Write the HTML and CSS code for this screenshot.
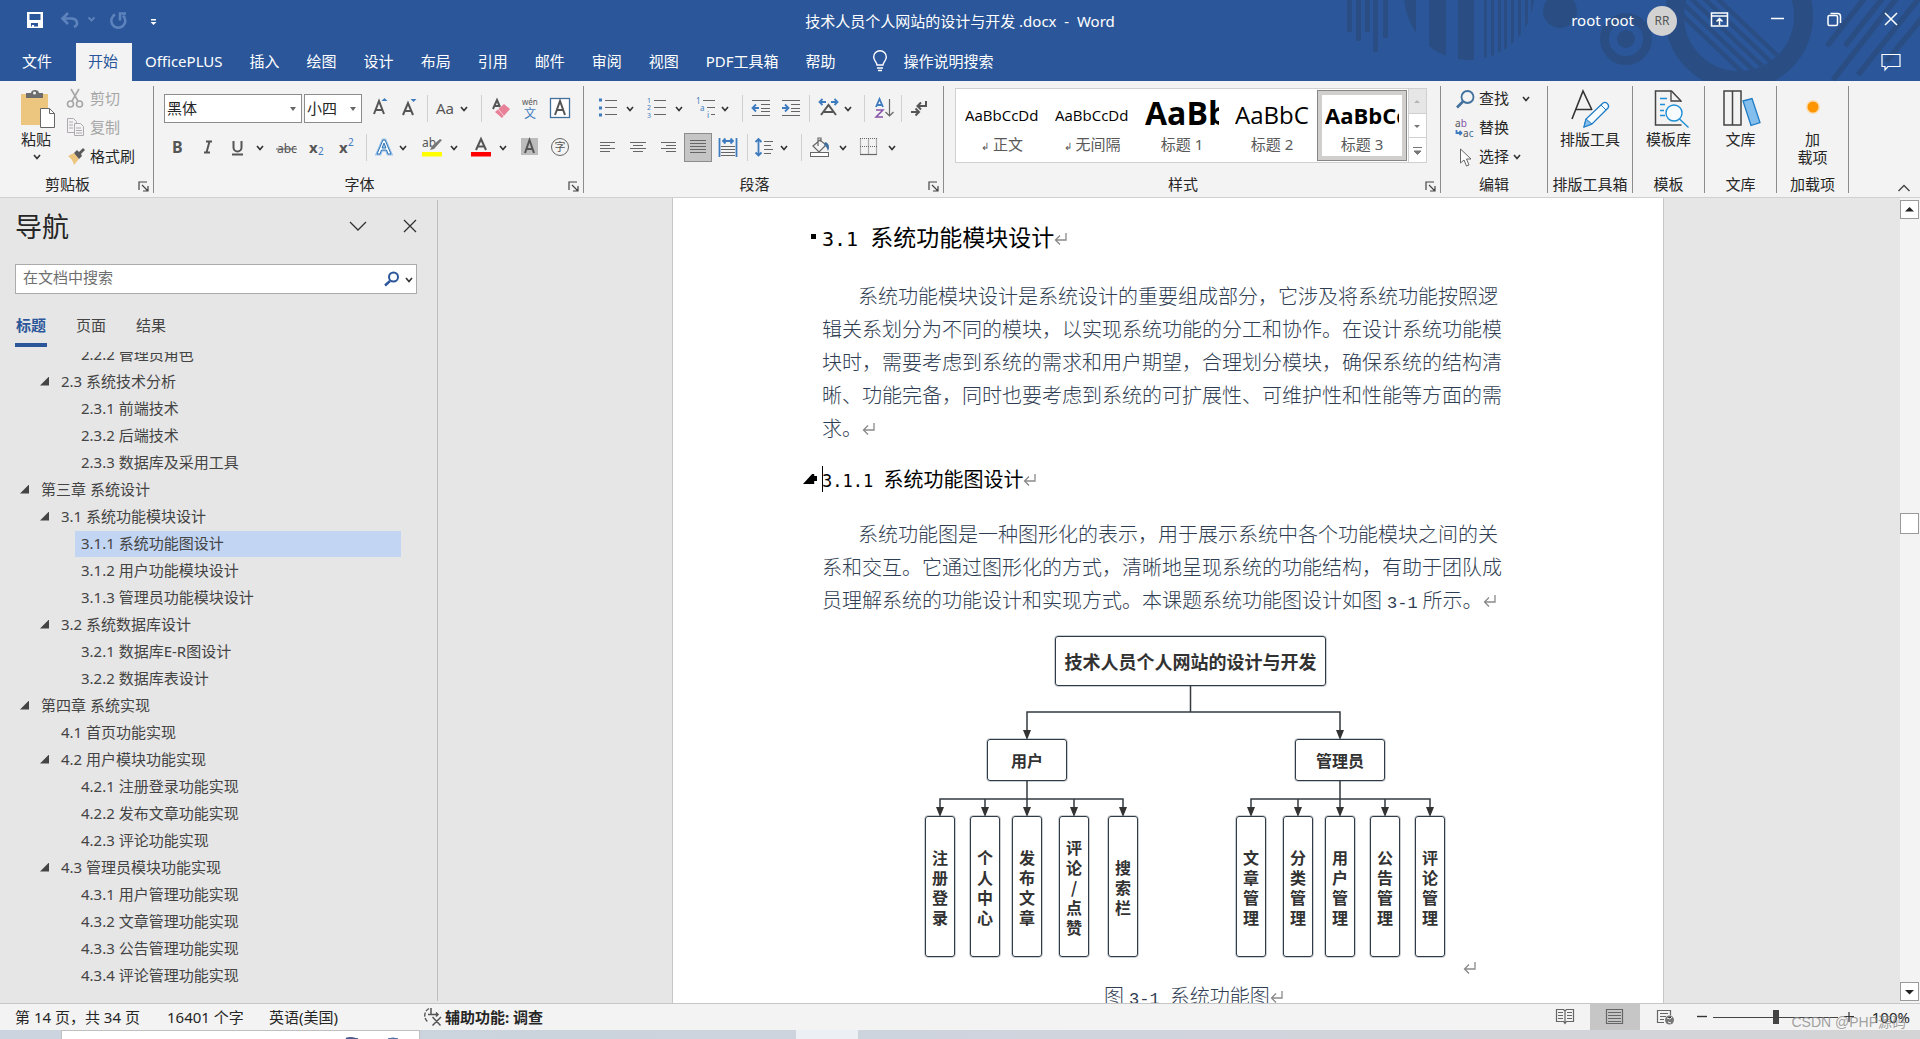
FILE: index.html
```html
<!DOCTYPE html>
<html lang="zh-CN">
<head>
<meta charset="utf-8">
<title>技术人员个人网站的设计与开发 .docx - Word</title>
<link rel="stylesheet" href="styles.css">
</head>
<body>
<svg class="defs" aria-hidden="true">
  <defs>
    <path id="chev" d="M-3 -2 L0 1.500 L3 -2" fill="none" stroke="#333" stroke-width="1.600"/>
    <g id="launch" fill="none" stroke="#444" stroke-width="1.200"><path d="M1 9V1H9M4 4L9.500 9.500M10 5V10H5"/></g>
    <path id="ret" d="M12 1V8H2M6 3.500L1.500 8L6 12.500" fill="none" stroke="#8a8a8a" stroke-width="1.300"/>
  </defs>
</svg>

<header class="top">
  <svg class="decor" width="600" height="81" viewBox="1320 0 600 81" aria-hidden="true">
    <defs>
      <clipPath id="disc"><circle cx="1469" cy="-5" r="65"/></clipPath>
      <clipPath id="ringHole"><circle cx="1739" cy="16" r="55"/></clipPath>
    </defs>
    <g fill="#2a4e84">
      <path d="M1347 0h5v32h-5zM1356 0h5v41h-5zM1365 0h5v32h-5zM1373 0h5v52h-5zM1383 0h5v38h-5z"/>
      <path clip-path="url(#disc)" d="M1400 0h16v70h-16zM1429 0h17v70h-17zM1458 0h16v70h-16zM1484 0h3v70h-3zM1491 0h3v70h-3zM1498 0h3v70h-3zM1504 0h3v70h-3zM1511 0h3v70h-3zM1518 0h3v70h-3zM1525 0h3v70h-3zM1531 0h3v70h-3z"/>
      <circle cx="1560" cy="11" r="17"/>
      <circle cx="1626" cy="39" r="9"/>
    </g>
    <circle cx="1626" cy="39" r="21.500" fill="none" stroke="#2a4e84" stroke-width="9"/>
    <circle cx="1739" cy="16" r="64.500" fill="none" stroke="#2a4e84" stroke-width="19"/>
    <g clip-path="url(#ringHole)" stroke="#2a4e84" stroke-width="4.500">
      <path d="M1690 -15L1790 80M1680 -12L1780 83M1670 -9L1770 86M1660 -6L1760 89M1700 -18L1800 77" />
    </g>
    <g stroke="#2a4e84" stroke-width="5.500">
      <path d="M1827 46L1871 -10M1845 46L1889 -10M1833 80L1903 -10M1858 75L1924 -8M1886 62L1930 8"/>
    </g>
  </svg>
  <div class="titlebar">
    <div class="quick">
      <button aria-label="保存"><svg width="32" height="28" viewBox="19 6 32 28"><path d="M27 12h16v16H27z" fill="#fff"/><path d="M29.500 14h11v6h-11zM31 23h7v3.500h-4V25h-2v1.500h-1z" fill="#2b579a"/></svg></button>
      <button aria-label="撤消"><svg width="48" height="28" viewBox="51 6 48 28"><g fill="none" stroke="#5d83bd" stroke-width="2.600"><path d="M68 13l-5.500 5.500L68 24M63 18.500h9a5.500 4.500 0 0 1 2 8.500"/><path d="M88.500 17.500l3 3 3-3" stroke-width="1.800"/></g></svg></button>
      <button aria-label="恢复"><svg width="36" height="28" viewBox="99 6 36 28"><path d="M115 14.500a7 7 0 1 0 8 1M126 13.500h-6v7" fill="none" stroke="#5d83bd" stroke-width="2.600"/></svg></button>
      <button aria-label="自定义快速访问工具栏"><svg width="36" height="28" viewBox="135 6 36 28"><path d="M151 19h5v1.500h-5zM150.500 22h6l-3 3z" fill="#fff"/></svg></button>
    </div>
    <div class="title">技术人员个人网站的设计与开发 .docx  -  Word</div>
    <div class="account">
      <span class="user-name">root root</span><span class="avatar">RR</span>
      <button class="win" aria-label="功能区显示选项"><svg width="57" height="40" viewBox="1691 0 57 40"><path d="M1711.500 13h16v13h-16zM1711 16h17M1719.500 25v-6.500M1716.500 21.500l3-3 3 3" fill="none" stroke="#fff" stroke-width="1.500"/></svg></button>
      <button class="win" aria-label="最小化"><svg width="57" height="40" viewBox="1748 0 57 40"><path d="M1771 18.500h13" stroke="#fff" stroke-width="1.500"/></svg></button>
      <button class="win" aria-label="还原"><svg width="58" height="40" viewBox="1805 0 58 40"><rect x="1828" y="15.500" width="9.500" height="10" rx="1.500" fill="none" stroke="#fff" stroke-width="1.500"/><path d="M1830.500 13.500h7a3 3 0 0 1 3 3v6.500" fill="none" stroke="#fff" stroke-width="1.500"/></svg></button>
      <button class="win" aria-label="关闭"><svg width="57" height="40" viewBox="1863 0 57 40"><path d="M1885 13l12 12M1897 13l-12 12" stroke="#fff" stroke-width="1.500"/></svg></button>
    </div>
  </div>
  <nav class="tabs">
    <button class="file">文件</button>
    <button class="active">开始</button>
    <button>OfficePLUS</button>
    <button>插入</button>
    <button>绘图</button>
    <button>设计</button>
    <button>布局</button>
    <button>引用</button>
    <button>邮件</button>
    <button>审阅</button>
    <button>视图</button>
    <button>PDF工具箱</button>
    <button>帮助</button>
    <button class="tell"><svg width="20" height="24" viewBox="869 50 20 24"><path d="M876 66c0-3-3.300-4-3.300-8a6.300 6.300 0 0 1 12.600 0c0 4-3.300 5-3.300 8zM876 69h6M877 71.500h4" fill="none" stroke="#fff" stroke-width="1.400"/></svg>操作说明搜索</button>
    <button class="comment" aria-label="批注"><svg width="24" height="24" viewBox="1879 50 24 24"><path d="M1882 54.500h18v12h-12l-3 3.500v-3.500h-3z" fill="none" stroke="#fff" stroke-width="1.200"/></svg></button>
  </nav>
</header>

<section class="ribbon">
  <div class="group g-clip">
    <div class="body">
      <button class="tall paste"><svg width="42" height="42" viewBox="18 88 42 42"><path d="M22 94h27v31H22z" fill="#ecc67e"/><path d="M27 98v-5h5c0-4 8-4 8 0h4v5z" fill="#6d6d6d"/><circle cx="35.500" cy="93" r="1.500" fill="#f3f3f3"/><path d="M41.500 108.500h9l5 5v14h-14z" fill="#fff" stroke="#666"/><path d="M50.500 108.500v5h5" fill="none" stroke="#666"/></svg><span>粘贴</span><svg width="42" height="18" viewBox="17 149 42 18"><use href="#chev" x="37" y="158"/></svg></button>
      <div class="stack">
        <button class="off"><svg width="20" height="22" viewBox="66 88 20 22"><g fill="none" stroke="#a6a6a6" stroke-width="1.600"><path d="M71 89l7 12M79 89l-7 12"/><circle cx="70.500" cy="104" r="3"/><circle cx="79.500" cy="104" r="3"/></g></svg><span>剪切</span></button>
        <button class="off"><svg width="20" height="22" viewBox="66 117 20 22"><g fill="#f3f3f3" stroke="#b0a8b0"><path d="M67.500 118.500h6l3 3v11h-9z"/><path d="M74.500 123.500h6l3 3v9h-9zM76 128h5M76 130.500h6M76 133h6M69 122h4M69 125h4M69 128h4"/></g></svg><span>复制</span></button>
        <button><svg width="20" height="22" viewBox="66 146 20 22"><path d="M68 156l6-3 5 6-5 6c-1-4-3-7-6-9z" fill="#ecc67e"/><path d="M74 153l3-3 2 2 4-4 2 2-4 4 1 2-3 3z" fill="#5a5a5a"/></svg><span>格式刷</span></button>
      </div>
    </div>
    <div class="label"><span>剪贴板</span><button class="launcher" aria-label="剪贴板设置"><svg width="11" height="11"><use href="#launch"/></svg></button></div>
  </div>

  <div class="group g-font">
    <div class="body rows">
      <div class="row">
        <label class="combo font"><select aria-label="字体"><option>黑体</option></select></label>
        <label class="combo size"><select aria-label="字号"><option>小四</option></select></label>
        <button aria-label="增大字号"><svg width="33" height="29" viewBox="362 94 33 29"><path d="M374 114l5-13 5 13M375.500 110h7" class="k2"/><path d="M381.500 101h6l-3-3z" class="fb"/></svg></button>
        <button aria-label="减小字号"><svg width="28" height="29" viewBox="395 94 28 29"><path d="M403 115l5-12 5 12M404.500 111h7" class="k2"/><path d="M410.500 99h6l-3 3z" class="fb"/></svg></button>
        <i class="sep"></i>
        <button aria-label="更改大小写"><svg width="46" height="29" viewBox="431 94 46 29"><text x="436" y="114" class="t" font-size="15">Aa</text><use href="#chev" x="464" y="109"/></svg></button>
        <i class="sep"></i>
        <button aria-label="清除格式"><svg width="31" height="29" viewBox="485 94 31 29"><path d="M493 109l4-9 3 7M494 106h5" class="k2"/><path d="M495 112l9-8 6 5-8 9z" fill="#e88097"/><path d="M498 109l6 7" stroke="#f8ccd6"/></svg></button>
        <button aria-label="拼音指南"><svg width="29" height="29" viewBox="516 94 29 29"><text x="522" y="105" class="t" font-size="8">wén</text><text x="524" y="118" class="tb" font-size="12">文</text></svg></button>
        <button aria-label="字符边框"><svg width="30" height="29" viewBox="545 94 30 29"><rect x="550.500" y="98.500" width="19" height="19" fill="#fff" stroke="#41719c" stroke-width="1.300"/><path d="M555 115l5-14 5 14M557 110h6" class="k2"/></svg></button>
      </div>
      <div class="row">
        <button aria-label="加粗"><svg width="28" height="29" viewBox="164 133 28 29"><text x="172" y="153" class="t b" font-size="16">B</text></svg></button>
        <button aria-label="倾斜"><svg width="30" height="29" viewBox="192 133 30 29"><path d="M206 141.500h6M204 152.500h6M209.500 141.500l-3 11" class="k2"/></svg></button>
        <button aria-label="下划线"><svg width="48" height="29" viewBox="222 133 48 29"><path d="M233.500 141v6.500a4 4 0 0 0 8 0V141M232 154.500h11" class="k2"/><use href="#chev" x="260" y="148"/></svg></button>
        <button aria-label="删除线"><svg width="33" height="29" viewBox="270 133 33 29"><text x="277" y="153" class="t" font-size="12">abc</text><path d="M276 149h21" stroke="#555"/></svg></button>
        <button aria-label="下标"><svg width="29" height="29" viewBox="303 133 29 29"><text x="309" y="153" class="t b" font-size="15">x</text><text x="318" y="155" class="tb" font-size="10">2</text></svg></button>
        <button aria-label="上标"><svg width="30" height="29" viewBox="332 133 30 29"><text x="339" y="153" class="t b" font-size="15">x</text><text x="348" y="146" class="tb" font-size="10">2</text></svg></button>
        <i class="sep"></i>
        <button aria-label="文本效果"><svg width="43" height="29" viewBox="370 133 43 29"><path d="M377 154l6-14h2l6 14h-3l-1.500-4h-5l-1.500 4zM382 148h4l-2-5z" fill="#fff" stroke="#9fc3ea" stroke-width="3"/><path d="M377 154l6-14h2l6 14h-3l-1.500-4h-5l-1.500 4zM382 148h4l-2-5z" fill="#fff" stroke="#2e75b6"/><use href="#chev" x="403" y="148"/></svg></button>
        <button aria-label="突出显示"><svg width="50" height="29" viewBox="413 133 50 29"><text x="422" y="147" class="t" font-size="12">ab</text><path d="M440 139l2 1-8 9-4 1 2-4z" fill="#777"/><path d="M422 152h20v4.500h-20z" fill="#ff0"/><use href="#chev" x="454" y="148"/></svg></button>
        <button aria-label="字体颜色"><svg width="49" height="29" viewBox="463 133 49 29"><path d="M476 150l5-11 5 11M478 146.500h6" class="k2"/><path d="M471 152h20v4.500h-20z" fill="red"/><use href="#chev" x="503" y="148"/></svg></button>
        <button aria-label="字符底纹"><svg width="33" height="29" viewBox="512 133 33 29"><path d="M521 138h17v17h-17z" fill="#bcbcbc"/><path d="M525 153l4.500-13 4.500 13M526.500 149h6" class="k2"/></svg></button>
        <button aria-label="带圈字符"><svg width="30" height="29" viewBox="545 133 30 29"><circle cx="560" cy="147" r="8.500" fill="none" stroke="#666"/><text x="554.500" y="151" class="t" font-size="11">字</text></svg></button>
      </div>
    </div>
    <div class="label"><span>字体</span><button class="launcher" aria-label="字体设置"><svg width="11" height="11"><use href="#launch"/></svg></button></div>
  </div>

  <div class="group g-para">
    <div class="body rows">
      <div class="row">
        <button aria-label="项目符号"><svg width="48" height="29" viewBox="592 94 48 29"><path d="M599 98.500h3v3h-3zM599 106.500h3v3h-3zM599 113.500h3v3h-3z" class="fb"/><path d="M605 100.500h12M605 107.500h12M605 114.500h12" class="k"/><use href="#chev" x="630" y="109"/></svg></button>
        <button aria-label="编号"><svg width="50" height="29" viewBox="640 94 50 29"><g class="tb" font-size="7"><text x="647" y="103">1</text><text x="647" y="110">2</text><text x="647" y="118">3</text></g><path d="M654 100.500h12M654 107.500h12M654 114.500h12" class="k"/><use href="#chev" x="679" y="109"/></svg></button>
        <button aria-label="多级列表"><svg width="48" height="29" viewBox="690 94 48 29"><g class="tb" font-size="8"><text x="696" y="104">1</text><text x="700" y="111">a</text><text x="707" y="118">i</text></g><path d="M703 100.500h12M707 107.500h8M711 114.500h4" class="k"/><use href="#chev" x="725" y="109"/></svg></button>
        <i class="sep"></i>
        <button aria-label="减少缩进"><svg width="30" height="29" viewBox="746 94 30 29"><path d="M752 100.500h18M761 104.500h9M761 108.500h9M761 111.500h9M752 115.500h18" class="k"/><path d="M759 108h-6M756 104.500l-3.500 3.500 3.500 3.500" class="kb"/></svg></button>
        <button aria-label="增加缩进"><svg width="29" height="29" viewBox="776 94 29 29"><path d="M782 100.500h18M791 104.500h9M791 108.500h9M791 111.500h9M782 115.500h18" class="k"/><path d="M782 108h6M785 104.500l3.500 3.500-3.500 3.500" class="kb"/></svg></button>
        <i class="sep"></i>
        <button aria-label="中文版式"><svg width="47" height="29" viewBox="813 94 47 29"><path d="M821 115l7.500-10 7.500 10M824 112h9" class="k2"/><path d="M820 102h6M822.500 99l-3 3 3 3M831 102h6M834.500 99l3 3-3 3" class="kb"/><use href="#chev" x="848" y="109"/></svg></button>
        <i class="sep"></i>
        <button aria-label="排序"><svg width="29" height="29" viewBox="868 94 29 29"><path d="M876 107l3.500-8 3.500 8M877 105h5" class="kb"/><path d="M876 110h7l-7 7h7" fill="none" stroke="#8653a8" stroke-width="1.500"/><path d="M889.500 99v17M885.500 112l4 4 4-4" class="k"/></svg></button>
        <i class="sep"></i>
        <button aria-label="显示编辑标记"><svg width="30" height="29" viewBox="905 94 30 29"><path d="M926 101v5h-8M921 102.500l-3.500 3.500 3.500 3.500M911 112h8M915.500 108.500l3.500 3.500-3.500 3.500" class="k2"/></svg></button>
      </div>
      <div class="row">
        <button aria-label="左对齐"><svg width="31" height="29" viewBox="592 133 31 29"><path d="M600 142.500h15M600 145.500h10M600 148.500h15M600 151.500h10" class="k"/></svg></button>
        <button aria-label="居中"><svg width="31" height="29" viewBox="623 133 31 29"><path d="M630 142.500h16M633 145.500h10M630 148.500h16M633 151.500h10" class="k"/></svg></button>
        <button aria-label="右对齐"><svg width="30" height="29" viewBox="654 133 30 29"><path d="M661 142.500h15M666 145.500h10M661 148.500h15M666 151.500h10" class="k"/></svg></button>
        <button aria-label="两端对齐" class="pressed"><svg width="28" height="29" viewBox="684 133 28 29"><path d="M690 140.500h16M690 143.500h16M690 146.500h16M690 149.500h16M690 152.500h16" class="k"/></svg></button>
        <button aria-label="分散对齐"><svg width="31" height="29" viewBox="712 133 31 29"><path d="M719.500 138v19M736.500 138v19M723 141h10M725.500 138.500l-2.500 2.500 2.500 2.500M730.500 138.500l2.500 2.500-2.500 2.500" class="kb"/><path d="M721 146.500h14M721 149.500h14M721 152.500h14M721 155.500h14" class="k"/></svg></button>
        <i class="sep"></i>
        <button aria-label="行距"><svg width="46" height="29" viewBox="751 133 46 29"><path d="M758.500 139v17M755.500 142l3-3 3 3M755.500 152.500l3 3 3-3" class="kb"/><path d="M764 141.500h9M764 145.500h7M764 149.500h9M764 153.500h7" class="k"/><use href="#chev" x="784" y="148"/></svg></button>
        <i class="sep"></i>
        <button aria-label="底纹"><svg width="48" height="29" viewBox="805 133 48 29"><path d="M813 146l7-6 6 5-7 7zM818 146v-8h3v4" fill="none" class="k"/><path d="M825 142c4 1 5 5 3 9-1-3-2-5-4-6z" fill="#41719c"/><rect x="810.500" y="152.500" width="18" height="4" fill="#fff" stroke="#666"/><use href="#chev" x="843" y="148"/></svg></button>
        <button aria-label="边框"><svg width="50" height="29" viewBox="853 133 50 29"><path d="M860.500 138.500v16M876.500 138.500v16M868.500 138.500v16M860 138.500h17M860 146.500h17" class="k" stroke-dasharray="1 1"/><path d="M860 154.500h17" class="k"/><use href="#chev" x="892" y="148"/></svg></button>
      </div>
    </div>
    <div class="label"><span>段落</span><button class="launcher" aria-label="段落设置"><svg width="11" height="11"><use href="#launch"/></svg></button></div>
  </div>

  <div class="group g-style">
    <div class="body">
      <div class="gallery">
        <div class="styles">
          <button><b class="pv">AaBbCcDd</b><span><small>↲</small> 正文</span></button>
          <button><b class="pv">AaBbCcDd</b><span><small>↲</small> 无间隔</span></button>
          <button><b class="pv h1">AaBb</b><span>标题 1</span></button>
          <button><b class="pv h2">AaBbC</b><span>标题 2</span></button>
          <button class="chosen"><b class="pv h3">AaBbCc</b><span>标题 3</span></button>
        </div>
        <div class="updown">
          <button class="dis" aria-label="上一行"><svg width="16" height="22"><path d="M5 13h6l-3-3z" fill="#b5b5b5"/></svg></button>
          <button aria-label="下一行"><svg width="16" height="22"><path d="M5 10h6l-3 3z" fill="#777"/></svg></button>
          <button aria-label="其他样式"><svg width="16" height="22"><path d="M4 8.500h9M5 12h7l-3.500 3.500z" fill="#777" stroke="#777"/></svg></button>
        </div>
      </div>
    </div>
    <div class="label"><span>样式</span><button class="launcher" aria-label="样式设置"><svg width="11" height="11"><use href="#launch"/></svg></button></div>
  </div>

  <div class="group g-edit">
    <div class="body">
      <div class="stack">
        <button><svg width="22" height="22" viewBox="1454 87 22 22"><circle cx="1467.500" cy="96" r="6" fill="none" stroke="#41719c" stroke-width="1.800"/><path d="M1463 100.500l-6 6" stroke="#41719c" stroke-width="2.600"/></svg><span>查找</span><svg width="26" height="22"><use href="#chev" x="14" y="11"/></svg></button>
        <button><svg width="22" height="22" viewBox="1454 117 22 22"><text x="1455" y="127" class="t" font-size="10">a<tspan fill="#8653a8">b</tspan></text><text x="1463" y="137" class="t" font-size="10">a<tspan fill="#41719c">c</tspan></text><path d="M1456.500 130v3h5M1459.500 131l2 2-2 2" class="kb"/></svg><span>替换</span></button>
        <button><svg width="22" height="22" viewBox="1454 145 22 22"><path d="M1460.500 148v14l3.500-3 2.500 6 2.500-1-2.500-6h4.500z" fill="#fff" stroke="#666"/></svg><span>选择</span><svg width="16" height="22"><use href="#chev" x="5" y="11"/></svg></button>
      </div>
    </div>
    <div class="label"><span>编辑</span></div>
  </div>

  <div class="group g-tool">
    <div class="body"><button class="tall"><svg width="44" height="42" viewBox="1569 88 44 42"><path d="M1573 119l11-28 9 19M1577 109.500h16" fill="none" stroke="#333" stroke-width="1.600"/><path d="M1585 127l2-8 17-16c3-2 7 2 5 5l-16 16z" fill="#f6fbff" stroke="#1e7bc4" stroke-width="1.300"/><path d="M1585 127l2-8 6 5z" fill="#83beec" stroke="#1e7bc4"/><path d="M1602 105l5 5" stroke="#1e7bc4"/></svg><span>排版工具</span></button></div>
    <div class="label"><span>排版工具箱</span></div>
  </div>
  <div class="group g-small">
    <div class="body"><button class="tall"><svg width="42" height="42" viewBox="1648 88 42 42"><path d="M1681 102v-1l-9.500-10h-16v34h26" fill="none" stroke="#444" stroke-width="1.500"/><path d="M1671 91v10h10" fill="none" stroke="#444" stroke-width="1.300"/><circle cx="1674" cy="113" r="8" fill="#f6fbff" stroke="#1e8fd6" stroke-width="1.400"/><path d="M1679.500 119l9 8.500M1660 98.500h7M1660 104.500h5M1660 110.500h4M1660 115.500h5" stroke="#1e8fd6" stroke-width="1.400"/></svg><span>模板库</span></button></div>
    <div class="label"><span>模板</span></div>
  </div>
  <div class="group g-small">
    <div class="body"><button class="tall"><svg width="42" height="42" viewBox="1720 88 42 42"><path d="M1724 91h17v34h-17zM1732.500 91v34" fill="none" stroke="#444" stroke-width="1.500"/><path d="M1743 101l9-2.500 8 24-9 3z" fill="#83beec" stroke="#1e7bc4" stroke-width="1.300"/></svg><span>文库</span></button></div>
    <div class="label"><span>文库</span></div>
  </div>
  <div class="group g-small">
    <div class="body"><button class="tall"><svg width="42" height="42" viewBox="1790 88 42 42"><circle cx="1811" cy="107" r="7" fill="#ffd08a" opacity=".6"/><circle cx="1811" cy="107" r="5.500" fill="#ff9500"/></svg><span>加<br>载项</span></button></div>
    <div class="label"><span>加载项</span></div>
  </div>
  <button class="collapse" aria-label="折叠功能区"><svg width="14" height="10"><path d="M1.500 8L7 2.500 12.500 8" fill="none" stroke="#444" stroke-width="1.400"/></svg></button>
</section>

<main class="work">
  <aside class="nav">
    <div class="nav-head">
      <h1>导航</h1>
      <button aria-label="任务窗格选项"><svg width="20" height="14"><path d="M2 3l8 8 8-8" fill="none" stroke="#333" stroke-width="1.300"/></svg></button>
      <button aria-label="关闭导航"><svg width="14" height="14"><path d="M1 1l12 12M13 1L1 13" stroke="#333" stroke-width="1.300"/></svg></button>
    </div>
    <div class="search">
      <input type="text" placeholder="在文档中搜索" aria-label="在文档中搜索">
      <button aria-label="搜索"><svg width="36" height="20" viewBox="380 269 36 20"><circle cx="393.500" cy="277" r="4.500" fill="none" stroke="#2b579a" stroke-width="2"/><path d="M390 281l-5 4.500" stroke="#2b579a" stroke-width="2.400"/><use href="#chev" x="409" y="280"/></svg></button>
    </div>
    <div class="nav-tabs">
      <button class="on">标题</button><button>页面</button><button>结果</button>
    </div>
    <div class="tree">
      <ul>
        <li class="l3"><a href="#">2.2.2 管理员角色</a></li>
        <li class="l2 open"><a href="#">2.3 系统技术分析</a></li>
        <li class="l3"><a href="#">2.3.1 前端技术</a></li>
        <li class="l3"><a href="#">2.3.2 后端技术</a></li>
        <li class="l3"><a href="#">2.3.3 数据库及采用工具</a></li>
        <li class="l1 open"><a href="#">第三章 系统设计</a></li>
        <li class="l2 open"><a href="#">3.1 系统功能模块设计</a></li>
        <li class="l3 current"><a href="#">3.1.1 系统功能图设计</a></li>
        <li class="l3"><a href="#">3.1.2 用户功能模块设计</a></li>
        <li class="l3"><a href="#">3.1.3 管理员功能模块设计</a></li>
        <li class="l2 open"><a href="#">3.2 系统数据库设计</a></li>
        <li class="l3"><a href="#">3.2.1 数据库E-R图设计</a></li>
        <li class="l3"><a href="#">3.2.2 数据库表设计</a></li>
        <li class="l1 open"><a href="#">第四章 系统实现</a></li>
        <li class="l2"><a href="#">4.1 首页功能实现</a></li>
        <li class="l2 open"><a href="#">4.2 用户模块功能实现</a></li>
        <li class="l3"><a href="#">4.2.1 注册登录功能实现</a></li>
        <li class="l3"><a href="#">4.2.2 发布文章功能实现</a></li>
        <li class="l3"><a href="#">4.2.3 评论功能实现</a></li>
        <li class="l2 open"><a href="#">4.3 管理员模块功能实现</a></li>
        <li class="l3"><a href="#">4.3.1 用户管理功能实现</a></li>
        <li class="l3"><a href="#">4.3.2 文章管理功能实现</a></li>
        <li class="l3"><a href="#">4.3.3 公告管理功能实现</a></li>
        <li class="l3"><a href="#">4.3.4 评论管理功能实现</a></li>
      </ul>
    </div>
  </aside>

  <div class="canvas">
    <article class="page">
      <h2><i class="mark square"></i><span class="num">3.1 </span>系统功能模块设计<svg class="ret" width="14" height="14"><use href="#ret"/></svg></h2>
      <p class="first">系统功能模块设计是系统设计的重要组成部分，它涉及将系统功能按照逻<br>辑关系划分为不同的模块，以实现系统功能的分工和协作。在设计系统功能模<br>块时，需要考虑到系统的需求和用户期望，合理划分模块，确保系统的结构清<br>晰、功能完备，同时也要考虑到系统的可扩展性、可维护性和性能等方面的需<br>求。<svg class="ret" width="14" height="14"><use href="#ret"/></svg></p>
      <h3><i class="mark tri"></i><i class="caret"></i><span class="num">3.1.1 </span>系统功能图设计<svg class="ret" width="14" height="14"><use href="#ret"/></svg></h3>
      <p class="second">系统功能图是一种图形化的表示，用于展示系统中各个功能模块之间的关<br>系和交互。它通过图形化的方式，清晰地呈现系统的功能结构，有助于团队成<br>员理解系统的功能设计和实现方式。本课题系统功能图设计如图<span class="num fig">3-1</span>所示。<svg class="ret" width="14" height="14"><use href="#ret"/></svg></p>
      <figure>
        <div class="diagram">
          <svg width="522" height="322" viewBox="924 636 522 322" aria-hidden="true">
            <g fill="none" stroke="#333a40" stroke-width="1.500">
              <path d="M1190.500 686v26M1027 735v-23h313v23M1027 781v18M1340 781v18"/>
              <path d="M940 812v-13h183v13M985 812v-13M1027 812v-13M1074 812v-13M1251 812v-13h179v13M1298 812v-13M1340 812v-13M1385 812v-13"/>
            </g>
            <g fill="#333">
              <path d="M1023 730h8l-4 10zM1336 730h8l-4 10z"/>
              <path d="M936 807h8l-4 10zM981 807h8l-4 10zM1023 807h8l-4 10zM1070 807h8l-4 10zM1119 807h8l-4 10zM1247 807h8l-4 10zM1294 807h8l-4 10zM1336 807h8l-4 10zM1381 807h8l-4 10zM1426 807h8l-4 10z"/>
            </g>
          </svg>
          <div class="node root">技术人员个人网站的设计与开发</div>
          <div class="node user">用户</div>
          <div class="node admin">管理员</div>
          <div class="node leaf n1"><span>注册登录</span></div>
          <div class="node leaf n2"><span>个人中心</span></div>
          <div class="node leaf n3"><span>发布文章</span></div>
          <div class="node leaf n4"><span>评论/点赞</span></div>
          <div class="node leaf n5"><span>搜索栏</span></div>
          <div class="node leaf n6"><span>文章管理</span></div>
          <div class="node leaf n7"><span>分类管理</span></div>
          <div class="node leaf n8"><span>用户管理</span></div>
          <div class="node leaf n9"><span>公告管理</span></div>
          <div class="node leaf n10"><span>评论管理</span></div>
        </div>
        <svg class="ret" width="14" height="14"><use href="#ret"/></svg>
        <figcaption>图<span class="num cap">3-1 </span>系统功能图<svg class="ret" width="14" height="14"><use href="#ret"/></svg></figcaption>
      </figure>
    </article>
  </div>

  <div class="scroll">
    <button aria-label="向上滚动"><svg width="17" height="17"><path d="M4 10.500h9L8.500 6z" fill="#222"/></svg></button>
    <div class="track"><div class="thumb"></div></div>
    <button aria-label="向下滚动"><svg width="17" height="17"><path d="M4 7h9l-4.500 4.500z" fill="#222"/></svg></button>
  </div>
</main>

<footer class="status">
  <span class="s1">第 14 页，共 34 页</span>
  <span class="s2">16401 个字</span>
  <span class="s3">英语(美国)</span>
  <button class="a11y"><svg width="22" height="22" viewBox="422 1007 22 22"><path d="M429 1009.500a8 8 0 0 0-1 13.500" fill="none" stroke="#555" stroke-width="1.400" stroke-dasharray="4 1.500"/><path d="M431 1009v7M428 1015.500h10M436 1013.500l2 2-2 2M432.500 1018l8 8.500M441 1018l-8.500 8.500" fill="none" stroke="#555" stroke-width="1.500"/></svg>辅助功能: 调查</button>
  <div class="views">
    <button aria-label="阅读视图"><svg width="50" height="26" viewBox="1540 1004 50 26"><path d="M1556.500 1009.500h7l1.500 1.500 1.500-1.500h7v12h-7l-1.500 2-1.500-2h-7zM1565 1011v12M1558 1012.500h5M1558 1015.500h5M1558 1018.500h5M1567 1012.500h5M1567 1015.500h5M1567 1018.500h5" class="k"/></svg></button>
    <button aria-label="页面视图" class="on"><svg width="50" height="26" viewBox="1590 1004 50 26"><path d="M1606.500 1009.500h16v14h-16zM1608 1012.500h13M1608 1015.500h13M1608 1018.500h13M1608 1021.500h13" class="k"/></svg></button>
    <button aria-label="Web 版式视图"><svg width="50" height="26" viewBox="1640 1004 50 26"><path d="M1664 1022.500h-6.500v-12h13v5M1660 1013.500h8M1660 1016.500h6M1660 1019.500h4" class="k"/><circle cx="1669.500" cy="1020" r="4.500" fill="#777"/><path d="M1667 1018l3 1 2-2M1668 1022l3 1" stroke="#eee"/></svg></button>
  </div>
  <div class="zoom">
    <button aria-label="缩小"><svg width="12" height="12"><path d="M1 5.500h10" stroke="#333" stroke-width="1.400"/></svg></button>
    <input type="range" min="10" max="190" value="100" aria-label="缩放">
    <button aria-label="放大"><svg width="12" height="12"><path d="M1 5.500h10M6 1v10" stroke="#333" stroke-width="1.200"/></svg></button>
    <span>100%</span>
  </div>
  <div class="watermark">CSDN @PHP源码</div>
</footer>
<div class="taskbar">
  <div class="tasksearch"><svg width="80" height="8" viewBox="340 1031 80 8"><path d="M346 1038.500c3-1 6-1 9 0l3 .5h-6z" fill="#4a5a8c" stroke="#4a5a8c" stroke-width="1.500"/><path d="M388 1039q5-2 10 0z" fill="#4a6ea8" stroke="#4a6ea8"/></svg></div>
  <div class="tasklight"></div>
  <time>22:40</time>
</div>
</body>
</html>
```

FILE: styles.css
```css
* { box-sizing: border-box; }
html, body { height: 100%; }
body {
  margin: 0;
  display: flex;
  flex-direction: column;
  overflow: hidden;
  font: 15px/18px "Noto Sans", "Noto Sans CJK SC", sans-serif;
  color: #262626;
  background: #e6e6e6;
}
button {
  margin: 0;
  padding: 0;
  border: 0;
  background: none;
  color: inherit;
  font: inherit;
  white-space: nowrap;
}
svg { display: block; flex: none; }
.defs { position: absolute; width: 0; height: 0; }

/* shared icon strokes */
.k { fill: none; stroke: #666; stroke-width: 1.2; }
.k2 { fill: none; stroke: #555; stroke-width: 2; }
.kb { fill: none; stroke: #3f7cbf; stroke-width: 1.8; }
.fb { fill: #3f7cbf; }
.t { fill: #555; }
.tb { fill: #3f7cbf; }
.b { font-weight: 700; }

/* title bar and tabs */
.top {
  position: relative;
  flex: none;
  background: #2b579a;
  color: #fff;
}
.decor { position: absolute; right: 0; top: 0; }
.titlebar {
  position: relative;
  display: grid;
  grid-template-columns: 1fr auto 1fr;
  align-items: center;
  height: 43px;
}
.quick { display: flex; padding: 0 0 3px 19px; }
.title { padding-bottom: 2px; white-space: pre; }
.account {
  display: flex;
  justify-content: flex-end;
  align-items: center;
  height: 43px;
}
.user-name { padding-bottom: 3px; }
.avatar {
  width: 30px;
  height: 30px;
  margin: 0 14px 1px 13px;
  border-radius: 50%;
  background: #d2d2d2;
  color: #555;
  font-size: 12px;
  line-height: 30px;
  text-align: center;
}
.win { align-self: flex-start; }
.tabs { position: relative; display: flex; height: 38px; }
.tabs button { padding: 0 14px 2px 13px; }
.tabs .file { width: 76px; padding: 0 16px 2px 22px; text-align: left; }
.tabs .active { padding: 0 14px 2px 12px; background: #f3f3f3; color: #2b579a; }
.tabs .tell { display: flex; align-items: center; gap: 14px; padding-left: 20px; }
.tabs .comment { margin-left: auto; padding: 0 17px 0 0; }

/* ribbon */
.ribbon {
  display: flex;
  flex: none;
  height: 117px;
  padding-top: 5px;
  background: #f3f3f3;
  border-bottom: 1px solid #d0d0d0;
}
.group {
  display: flex;
  flex-direction: column;
  flex: none;
  height: 107px;
  border-right: 1px solid #8c8c8c;
}
.body { flex: 1; display: flex; }
.label { display: flex; height: 18px; line-height: 18px; }
.label span { flex: 1; text-align: center; white-space: nowrap; }
.launcher { width: 18px; padding: 4px 0 0 3px; }
.g-clip { width: 154px; }
.g-font { width: 430px; }
.g-para { width: 360px; }
.g-style { flex: 1; }
.g-edit { width: 107px; }
.g-tool { width: 85px; }
.g-small { width: 72px; }
.rows { flex-direction: column; gap: 10px; padding: 8px 0 0 8px; }
.g-font .rows { padding-left: 10px; }
.row { display: flex; height: 29px; }
.sep { flex: none; width: 1px; margin: 1px 3px 1px 4px; background: #d0d0d0; }
.pressed { background: #c5c5c5; outline: 1px solid #8c8c8c; outline-offset: -1px; }
.combo {
  position: relative;
  margin-right: 2px;
  border: 1px solid #8c8c8c;
  background: #fff;
}
.combo::after {
  content: "";
  position: absolute;
  right: 5px;
  top: 12px;
  border: 3px solid transparent;
  border-top: 4px solid #666;
  border-bottom: 0;
}
.combo.font { width: 138px; }
.combo.size { width: 58px; margin-right: 0; }
.combo select {
  appearance: none;
  width: 100%;
  height: 27px;
  padding: 0 2px 2px;
  border: 0;
  background: none;
  color: #262626;
  font: inherit;
}
.tall {
  display: flex;
  flex-direction: column;
  align-items: center;
  width: 100%;
  padding-top: 2px;
  margin-bottom: auto;
}
.paste { width: 48px; margin-left: 14px; }
.paste span { margin-right: 4px; }
.stack { display: flex; flex-direction: column; gap: 3px; margin-left: 4px; }
.stack button { display: flex; align-items: center; gap: 4px; height: 26px; }
.stack span { padding-bottom: 2px; }
.stack .off { color: #a6a6a6; }
.g-edit .stack { margin-left: 13px; }
.g-edit .stack button { gap: 3px; }

.gallery {
  display: flex;
  flex: 1;
  height: 75px;
  margin: 2px 13px 0 11px;
  border: 1px solid #d0d0d0;
  background: #fff;
}
.styles { display: flex; flex: 1; overflow: hidden; padding: 1px 0 1px 1px; }
.styles button {
  display: flex;
  flex-direction: column;
  width: 90px;
  padding: 2px 8px;
  color: #595959;
}
.styles .chosen { padding: 0 3px; border: 5px solid #d0cfcd; outline: 1px solid #868686; outline-offset: -1px; }
.styles .chosen .pv { height: 40px; line-height: 40px; }
.styles small { font-size: 10px; }
.styles span { width: 100%; text-align: center; }
.pv {
  width: 74px;
  height: 43px;
  overflow: hidden;
  color: #000;
  font-family: "Open Sans", sans-serif;
  font-size: 15px;
  font-weight: 400;
  line-height: 46px;
  text-align: left;
}
.pv.h1 { font-size: 32px; font-weight: 700; line-height: 41px; }
.pv.h2 { font-size: 24px; line-height: 45px; }
.pv.h3 { font-size: 22px; font-weight: 700; }
.updown { display: flex; flex-direction: column; width: 18px; border-left: 1px solid #d0d0d0; }
.updown button { flex: 1; border-bottom: 1px solid #d0d0d0; }
.updown button:last-child { border: 0; }
.updown .dis { background: #e6e6e6; }
.collapse { width: 71px; padding: 97px 0 0 48px; align-self: flex-start; }

/* working area */
.work { flex: 1; display: flex; min-height: 0; border-bottom: 1px solid #c6c6c6; }
.nav {
  display: flex;
  flex-direction: column;
  flex: none;
  width: 438px;
  margin: 2px 0;
  padding: 0 20px 0 15px;
  border-right: 1px solid #bdbdbd;
}
.nav-head { display: flex; align-items: center; height: 52px; gap: 35px; }
.nav h1 { flex: 1; margin: 0; padding-top: 2px; font-size: 27px; font-weight: 400; line-height: 36px; }
.search {
  display: flex;
  align-items: center;
  height: 30px;
  margin-top: 12px;
  border: 1px solid #ababab;
  background: #fff;
}
.search input {
  flex: 1;
  min-width: 0;
  height: 26px;
  padding: 0 7px 5px;
  border: 0;
  background: none;
  font: inherit;
}
.search input::placeholder { color: #6e6e6e; opacity: 1; }
.nav-tabs { display: flex; gap: 28px; margin-top: 17px; height: 36px; color: #444; }
.nav-tabs button { width: 32px; padding: 0 0 8px; }
.nav-tabs .on { border-bottom: 4px solid #2b579a; padding-bottom: 4px; color: #2b579a; font-weight: 700; }
.tree { flex: 1; min-height: 0; overflow: hidden; margin-top: 5px; }
.tree ul { list-style: none; margin: -11px 0 0; padding: 0 16px 0 0; }
.tree li { display: flex; align-items: center; height: 27px; }
.tree a { flex: 1; height: 26px; line-height: 24px; color: #444; text-decoration: none; padding-left: 6px; white-space: nowrap; }
.tree li::before { content: ""; flex: none; width: 20px; height: 9px; margin-bottom: 1px; }
.tree .open::before { background: #444; clip-path: polygon(5px 9px, 14px 0, 14px 9px); }
.tree .l2 { padding-left: 20px; }
.tree .l3 { padding-left: 40px; }
.tree .current a { background: #c2d5f2; }

.canvas { flex: 1; min-width: 0; overflow: hidden; padding-right: 2px; }
.page {
  width: 992px;
  min-height: 100%;
  margin: 0 auto;
  padding: 19px 0 0 149px;
  border: solid #c6c6c6;
  border-width: 0 1px;
  background: #fff;
  color: #2f3d52;
  font-family: "Noto Sans CJK SC", sans-serif;
  font-size: 20px;
  font-weight: 300;
  line-height: 33px;
  white-space: nowrap;
}
.num { font-family: "DejaVu Sans Mono", monospace; line-height: 1; white-space: pre; }
.ret { display: inline-block; }
.page h2, .page h3 { position: relative; margin: 0; color: #000; font-weight: 400; }
.page h2 { font-size: 23px; line-height: 38px; height: 38px; }
.page h2 .num { font-size: 20px; }
.page h3 { height: 30px; margin-top: 20px; font-size: 20px; line-height: 30px; }
.page h3 .num { font-size: 17px; }
.page p { margin: 24px 0 0; text-indent: 36px; }
.page .first { height: 165px; }
.page .second { height: 99px; margin-top: 23px; }
.num.fig, .num.cap { font-family: "Liberation Mono", monospace; font-size: 17px; padding: 0 5px; }
.num.cap { padding-right: 0; }
.mark { position: absolute; background: #000; }
.square { left: -11px; top: 17px; width: 5px; height: 5px; }
.tri { left: -19px; top: 10px; width: 14px; height: 10px; clip-path: polygon(0 100%, 65% 0, 80% 0, 80% 20%, 100% 20%, 100% 70%, 80% 70%, 80% 100%); }
.caret { position: absolute; left: 0; top: 2px; width: 1px; height: 26px; background: #000; }

figure { margin: 20px 0 0; }
.diagram { position: relative; width: 522px; height: 322px; margin-left: 102px; }
figure > .ret { margin: 3px 0 0 641px; display: block; }
figcaption { height: 40px; margin: 1px 0 0 282px; line-height: 40px; }
.node {
  position: absolute;
  display: flex;
  align-items: center;
  justify-content: center;
  border: 1px solid #2f3b46;
  outline: 1px solid #2f3b4640;
  border-radius: 3px;
  background: #fff;
  color: #323232;
  font-size: 16px;
  font-weight: 700;
  line-height: 20px;
}
.root { left: 131px; top: 0; width: 271px; height: 50px; font-size: 18px; }
.user { left: 63px; top: 103px; width: 80px; height: 42px; }
.admin { left: 371px; top: 103px; width: 90px; height: 42px; }
.leaf { top: 180px; width: 30px; height: 141px; }
.leaf span { width: 16px; text-align: center; white-space: normal; line-break: anywhere; }
.n1 { left: 1px; }
.n2 { left: 46px; }
.n3 { left: 88px; }
.n4 { left: 135px; }
.n5 { left: 184px; }
.n6 { left: 312px; }
.n7 { left: 359px; }
.n8 { left: 401px; }
.n9 { left: 446px; }
.n10 { left: 491px; }

.scroll { display: flex; flex-direction: column; flex: none; width: 20px; padding: 2px 1px 2px 0; background: #f3f3f3; }
.scroll button { height: 19px; border: 1px solid #9a9a9a; background: #fff; }
.track { flex: 1; padding-top: 294px; }
.thumb { height: 21px; border: 1px solid #9a9a9a; background: #fff; }

/* status bar */
.status {
  position: relative;
  display: flex;
  align-items: center;
  flex: none;
  height: 26px;
  padding: 0 10px 0 15px;
  background: #f3f3f3;
  white-space: nowrap;
}
.s1 { width: 152px; }
.s2 { width: 102px; }
.s3 { width: 153px; }
.a11y { display: flex; align-items: center; gap: 1px; font-weight: 700; }
.views { display: flex; margin-left: auto; }
.views .on { background: #c6c6c6; }
.zoom { display: flex; align-items: center; padding-left: 6px; }
.zoom span { width: 40px; margin-left: 15px; text-align: right; }
.zoom input {
  appearance: none;
  width: 125px;
  height: 14px;
  margin: 0 5px;
  background: linear-gradient(#444, #444) center / 100% 1px no-repeat;
}
.zoom input::-webkit-slider-thumb { appearance: none; width: 6px; height: 14px; background: #444; }
.watermark {
  position: absolute;
  right: 14px;
  top: 9px;
  color: #8a8a8acc;
  font: 14px/18px "Liberation Sans", "Noto Sans CJK SC", sans-serif;
}
.taskbar {
  position: relative;
  display: flex;
  flex: none;
  height: 9px;
  overflow: hidden;
  background: linear-gradient(90deg, #ccd5df 0, #cbd3dd 30%, #d0d4dd 60%, #d4d4d6 100%);
}
.tasksearch { width: 359px; margin-left: 61px; border: 1px solid #c0c0c0; border-bottom: 0; background: #fff; }
.tasksearch svg { margin-left: 278px; }
.tasklight { width: 62px; margin-left: 376px; background: #eceff3; }
.taskbar time { position: absolute; right: 94px; top: 6px; line-height: 16px; font-size: 14px; color: #111; }
```
